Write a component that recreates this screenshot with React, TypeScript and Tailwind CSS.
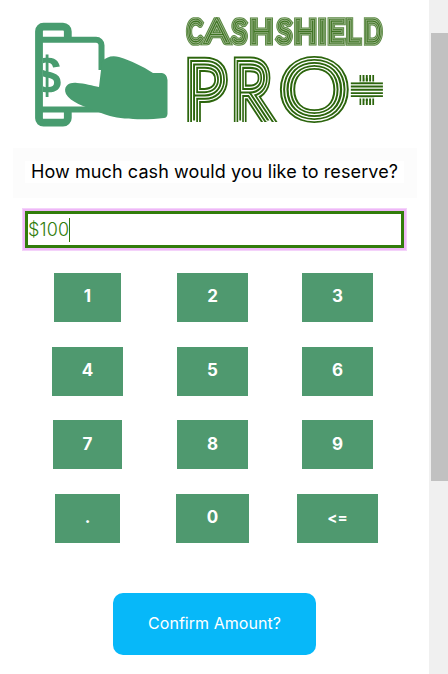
import React from "react";

const keys = [
  { label: "1", cls: "w-[67px] text-[17px]" },
  { label: "2", cls: "w-[71px] text-[17px]" },
  { label: "3", cls: "w-[71px] text-[17px]" },
  { label: "4", cls: "w-[71px] text-[17px]" },
  { label: "5", cls: "w-[71px] text-[17px]" },
  { label: "6", cls: "w-[71px] text-[17px]" },
  { label: "7", cls: "w-[69px] text-[17px]" },
  { label: "8", cls: "w-[71px] text-[17px]" },
  { label: "9", cls: "w-[71px] text-[17px]" },
  { label: ".", cls: "w-[65px] text-[17px]" },
  { label: "0", cls: "w-[73px] text-[17px]" },
  { label: "<=", cls: "w-[81px] text-[15px]" },
];

const GREEN = "#2c650d";

// Alternating green and white outlines around thin lettering give the inline stripes.
const bigBands: [string, number][] = [
  [GREEN, 13.6],
  ["#fff", 9.8],
  [GREEN, 7.4],
  ["#fff", 3.6],
  [GREEN, 1.1],
];
const smallBands: [string, number][] = [
  ["#5a8842", 7.6],
  ["#a9c09a", 5.6],
  ["#4b7c31", 4.4],
  ["#a9c09a", 2.2],
  ["#3f7423", 1],
];

// letter, x, horizontal scale
const nameLetters: [string, number, number][] = [
  ["C", 187.5, 0.68],
  ["A", 205.6, 1.17],
  ["S", 232.6, 0.86],
  ["H", 250.2, 1],
  ["S", 277.4, 0.86],
  ["H", 294.4, 0.97],
  ["I", 318.6, 1],
  ["E", 328, 0.9],
  ["L", 346.6, 0.84],
  ["D", 364.6, 0.74],
];

function Logo() {
  return (
    <svg width="404" height="148" viewBox="13 0 404 148" className="block will-change-transform">
      <g fill="none" stroke="#489c6f">
        <path d="M67.800 40V31.500a4.800 4.800 0 0 0-4.800-4.800h-19.500a4.500 4.500 0 0 0-4.500 4.500v87a4.500 4.500 0 0 0 4.500 4.500h19.500a4.800 4.800 0 0 0 4.800-4.800V109" strokeWidth="7.800" />
        <path d="M41 39.800H96a5.500 5.500 0 0 1 5.500 5.500V70M41 109.600H104" strokeWidth="6" />
      </g>
      <path d="M102 61.500C106 57 112 55 119 57C132 61 142 66 153 73H162Q167 74 167.500 80V114Q167 118 164 118C149 120 124 120 110 116C103 114 99 112 93 110C86 107 70 102 66 94C63 87 68 82 77 83C84 83 93 86 99 87Z" fill="#489c6f" />
      <svg x="43" y="45" width="24" height="60" viewBox="43 45 24 60">
        <text x="32.500" y="93" fontSize="52" fontWeight="700" fill="#489c6f" className="font-['Liberation_Sans',sans-serif]">$</text>
      </svg>
      <defs>
        <clipPath id="topLine"><rect x="184" y="17.300" width="200" height="28.500" /></clipPath>
        <clipPath id="bigLine"><rect x="184" y="56" width="98" height="66" /></clipPath>
        <g id="name" fontSize="30" fontWeight="100" className="font-['Lato',sans-serif]">
          {nameLetters.map(([c, x, s], i) => (
            <text key={i} transform={`translate(${x} 42.300) scale(${s} 1)`} vectorEffect="non-scaling-stroke">{c}</text>
          ))}
        </g>
        <g id="pr" fontSize="80" fontWeight="100" className="font-['Lato',sans-serif]">
          <text transform="translate(185.500 120) scale(0.88 1)" vectorEffect="non-scaling-stroke">P</text>
          <text transform="translate(232.400 120) scale(0.79 1)" vectorEffect="non-scaling-stroke">R</text>
        </g>
        <text id="o" transform="translate(281.300 116.300) scale(1.110 1)" vectorEffect="non-scaling-stroke" fontSize="76" fontWeight="100" className="font-['Lato',sans-serif]">O</text>
        <pattern id="plusFill" patternUnits="userSpaceOnUse" x="350" y="73" width="34" height="34">
          <path d="M10.200 2v30M13.500 2v30M16.800 2v30M20.100 2v30M23.300 2v30" stroke={GREEN} strokeWidth="1.900" />
          <rect y="8.500" width="34" height="17" fill="#fff" />
          <path d="M0 10.200h34M0 13.500h34M0 16.800h34M0 20.100h34M0 23.300h34" stroke={GREEN} strokeWidth="1.900" />
        </pattern>
      </defs>
      <g clipPath="url(#topLine)">
        {smallBands.map(([c, w], i) => <use key={i} href="#name" fill="none" stroke={c} strokeWidth={w} />)}
      </g>
      <g clipPath="url(#bigLine)">
        {bigBands.map(([c, w], i) => <use key={i} href="#pr" fill={c} stroke={c} strokeWidth={w} />)}
      </g>
      {bigBands.map(([c, w], i) => <use key={i} href="#o" fill={c} stroke={c} strokeWidth={w} />)}
      <text x="354" y="105.300" fontSize="44" fontWeight="700" fill="url(#plusFill)" stroke="url(#plusFill)" strokeWidth="10" className="font-['Liberation_Sans',sans-serif]">+</text>
    </svg>
  );
}

export default function App() {
  return (
    <div className="flex h-[674px] w-[448px] overflow-hidden bg-white font-['Inter','Open_Sans',sans-serif]">
      <main className="flex w-[429px] flex-col pl-[13px] pr-3">
        <Logo />
        <div className="flex h-[50px] items-start bg-[#fcfcfc] px-3 pt-[13px]">
          <h1 className="h-[22px] w-[379px] whitespace-nowrap bg-white text-center text-[18px] leading-[22px] tracking-[0.1px] text-black">How much cash would you like to reserve?</h1>
        </div>
        <div className="ml-3 mt-[13px] flex h-[37px] w-[379px] items-center border-[3px] border-[#327d0b] bg-white shadow-[0_0_0_2px_#efb8f8,0_0_0_3px_#f4d2fa]">
          <span className="pb-px text-[18px] font-light tracking-[0.1px] text-[#327d0b]">$100</span>
          <span className="h-6 w-px bg-[#327d0b]" />
        </div>
        <div className="ml-3 mt-[25px] grid w-[375px] grid-cols-3 gap-y-[24.700px]">
          {keys.map((k) => (
            <div key={k.label} className="flex justify-center">
              <button className={`h-[49px] bg-[#4f996f] pb-px font-bold text-white ${k.cls}`}>{k.label}</button>
            </div>
          ))}
        </div>
        <button className="ml-[100px] mt-[50px] h-[62px] w-[203px] rounded-[10px] bg-[#07b8f9] pb-[2px] text-[16px] tracking-[0.040px] text-white">Confirm Amount?</button>
      </main>
      <aside className="w-[19px] bg-[#f0f0f0] pl-[2px] pt-[33px]">
        <div className="h-[448px] bg-[#c1c1c1]" />
      </aside>
    </div>
  );
}
